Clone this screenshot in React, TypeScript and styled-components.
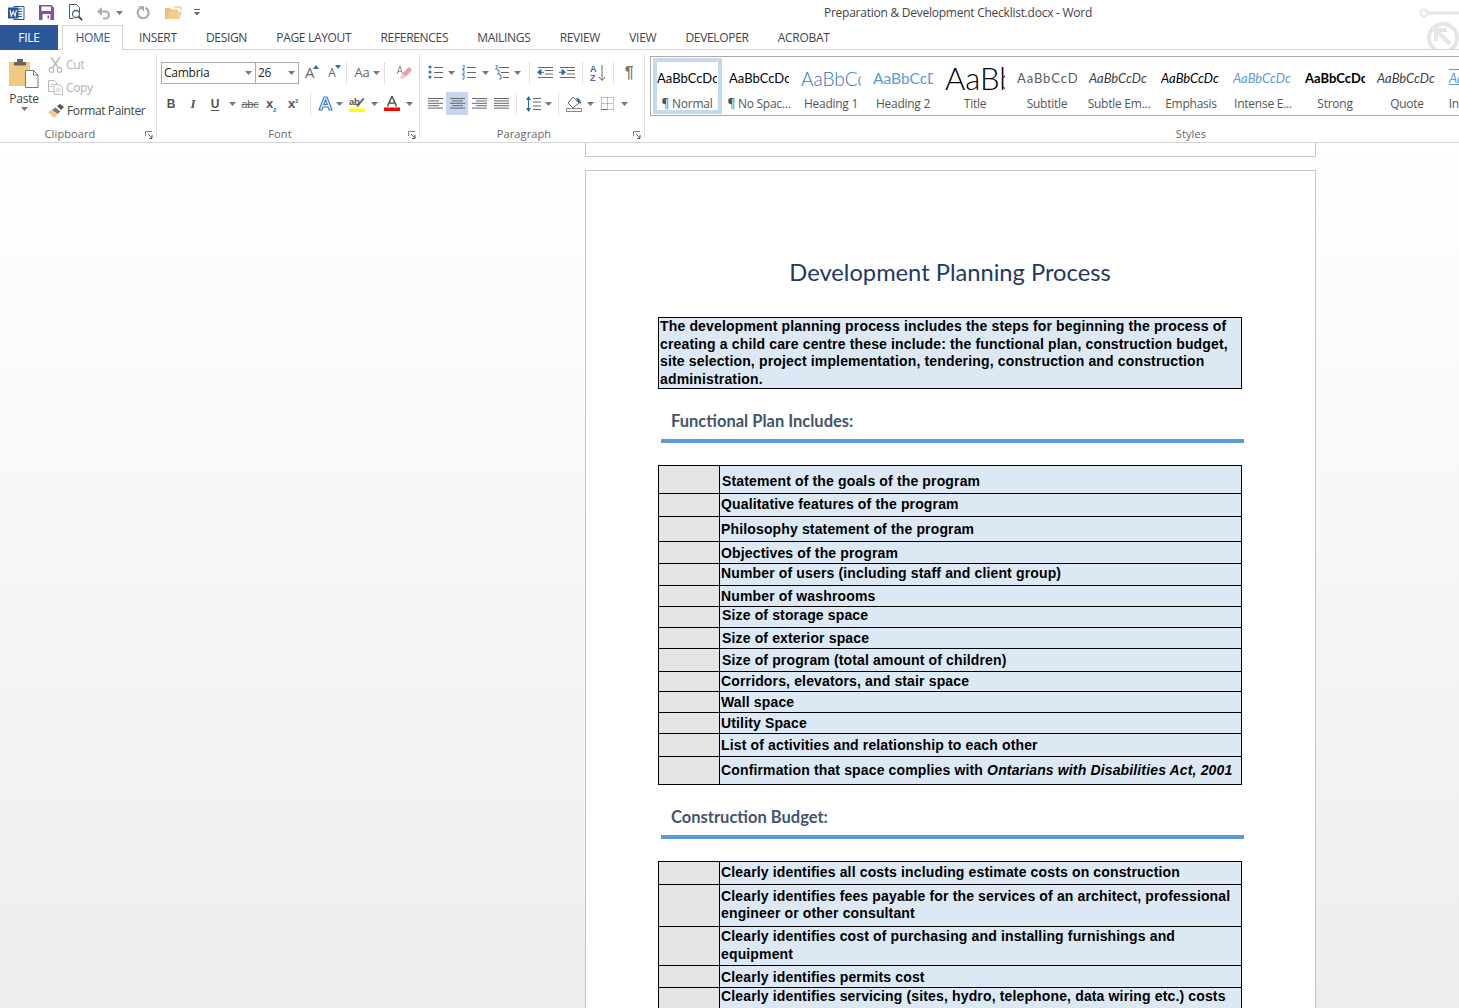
import React from "react";
import styled, { createGlobalStyle } from "styled-components";

const UI_FONT = `"Open Sans", "Noto Sans", sans-serif`;

const Global = createGlobalStyle`
  html, body { margin: 0; padding: 0; height: 100%; overflow: hidden; background: #fff; }
  #root { height: 100%; }
  * { box-sizing: border-box; }
`;

const Shell = styled.div`
  position: relative;
  width: 1459px;
  height: 1008px;
  overflow: hidden;
  display: flex;
  flex-direction: column;
  font-family: ${UI_FONT};
  font-size: 12px;
  letter-spacing: -0.25px;
  color: #444;
`;

/* ---------- title bar ---------- */
const TitleBar = styled.div`
  height: 25px;
  flex: none;
  display: flex;
  align-items: center;
  position: relative;
  padding-left: 5px;
`;
const Qat = styled.span<{ $w: number }>`
  width: ${(p) => p.$w}px;
  height: 22px;
  flex: none;
  display: flex;
  align-items: center;
  justify-content: center;
`;
const DocName = styled.div`
  position: absolute;
  left: 824px;
  top: 4px;
  line-height: 17px;
  white-space: nowrap;
  color: #444;
`;
const Watermark = styled.svg`
  position: absolute;
  right: 0;
  top: 0;
`;

/* ---------- tabs ---------- */
const TabStrip = styled.div`
  height: 25px;
  flex: none;
  display: flex;
  border-bottom: 1px solid #d4d4d4;
  position: relative;
`;
const FileTab = styled.div`
  width: 58px;
  height: 25px;
  margin-right: 4px;
  background: #2b579a;
  color: #fff;
  display: flex;
  align-items: center;
  justify-content: center;
`;
const Tab = styled.div<{ $active?: boolean }>`
  height: 25px;
  padding: 0 14.6px;
  display: flex;
  align-items: center;
  white-space: nowrap;
  letter-spacing: -0.32px;
  color: ${(p) => (p.$active ? "#2b579a" : "#444")};
  background: ${(p) => (p.$active ? "#fff" : "transparent")};
  ${(p) => p.$active && "border: 1px solid #d4d4d4; border-bottom: 0; padding: 0 12.5px 1px; margin-right: 1px;"}
`;

/* ---------- ribbon ---------- */
const Ribbon = styled.div`
  height: 93px;
  flex: none;
  display: flex;
  padding-top: 3px;
  border-bottom: 1px solid #d4d4d4;
  overflow: hidden;
  background: #fff;
  position: relative;
`;
const Group = styled.div<{ $w?: number }>`
  position: relative;
  ${(p) => (p.$w ? `width: ${p.$w}px; flex: none;` : "flex: 1; min-width: 0;")}
  height: 85px;
  padding: 8px 0 0 4px;
  display: flex;
  flex-direction: column;
  border-right: 1px solid ${(p) => (p.$w ? "#e1e1e1" : "transparent")};
`;
const GroupLabel = styled.div<{ $w?: number }>`
  margin-top: auto;
  margin-bottom: -4px;
  margin-right: 20px;
  height: 16px;
  flex: none;
  ${(p) => p.$w && `width: ${p.$w}px;`}
  line-height: 16px;
  font-size: 11px;
  letter-spacing: 0.1px;
  text-align: center;
  color: #666;
`;
const Launcher = styled.svg`
  position: absolute;
  right: 3px;
  bottom: -1px;
`;
const ClipboardBody = styled.div`
  display: flex;
  margin-top: -8px;
`;
const PasteCol = styled.div`
  width: 40px;
  display: flex;
  flex-direction: column;
  align-items: center;
  padding-top: 5px;
`;
const PasteLabel = styled.div`
  margin-top: 3px;
  height: 16px;
  line-height: 16px;
  color: #444;
`;
const SmallCol = styled.div`
  margin-left: 4px;
  display: flex;
  flex-direction: column;
`;
const SmallBtn = styled.div<{ $off?: boolean }>`
  height: 23px;
  display: flex;
  align-items: center;
  gap: 3px;
  white-space: nowrap;
  letter-spacing: -0.38px;
  color: ${(p) => (p.$off ? "#b1b1b1" : "#444")};
`;
const ToolRows = styled.div`
  display: flex;
  flex-direction: column;
  gap: 8px;
`;
const ToolRow = styled.div<{ $ml?: number }>`
  height: 23px;
  margin-left: ${(p) => p.$ml ?? 0}px;
  display: flex;
  align-items: center;
`;
const Tool = styled.span<{ $w?: number; $on?: boolean }>`
  width: ${(p) => p.$w ?? 22}px;
  height: 23px;
  flex: none;
  display: flex;
  align-items: center;
  justify-content: center;
  position: relative;
  background: ${(p) => (p.$on ? "#c5d6f0" : "transparent")};
  & > svg { flex: none; }
`;
const Sep = styled.span<{ $ml?: number; $mr?: number }>`
  width: 1px;
  height: 22px;
  flex: none;
  background: #e1e1e1;
  margin: 0 ${(p) => p.$mr ?? 5}px 0 ${(p) => p.$ml ?? 5}px;
`;
const Combo = styled.div<{ $w: number }>`
  width: ${(p) => p.$w}px;
  height: 22px;
  flex: none;
  margin-right: -1px;
  border: 1px solid #ababab;
  display: flex;
  align-items: center;
  justify-content: space-between;
  padding: 0 3px 0 2px;
  color: #222;
`;
const GlyphB = styled.span`
  font-family: "Liberation Sans", sans-serif;
  font-weight: 700;
  font-size: 12px;
  color: #555;
`;
const GlyphI = styled(GlyphB)`
  font-family: "Liberation Serif", serif;
  font-style: italic;
  font-size: 13px;
`;
const GlyphU = styled(GlyphB)`
  text-decoration: underline;
  text-underline-offset: 2px;
`;
const GlyphAbc = styled.span`
  font-family: "Liberation Sans", sans-serif;
  font-size: 11px;
  color: #666;
  text-decoration: line-through;
`;
const GlyphScript = styled.span`
  font-family: "Liberation Sans", sans-serif;
  font-weight: 700;
  font-size: 13px;
  color: #555;
  & sub, & sup { font-size: 6px; color: #2b6cb0; line-height: 0; }
`;
const GlyphA = styled.span<{ $size: number }>`
  font-size: ${(p) => p.$size}px;
  color: #666;
  line-height: 1;
`;
const Pilcrow = styled.span`
  font-family: "Liberation Sans", sans-serif;
  font-size: 16px;
  font-weight: 700;
  color: #777;
`;

/* ---------- styles gallery ---------- */
const Gallery = styled.div`
  margin: -5px 0 0 1px;
  height: 60px;
  width: 900px;
  flex: none;
  display: flex;
  border: 1px solid #ababab;
  border-right: 0;
`;
const StyleItem = styled.div<{ $active?: boolean }>`
  width: 69px;
  height: 56px;
  margin: 1px 1.5px 0;
  flex: none;
  display: flex;
  flex-direction: column;
  align-items: center;
  box-shadow: ${(p) => (p.$active ? "inset 0 0 0 4px #c5d9f1" : "none")};
`;
const Sample = styled.div<{ $css: string }>`
  width: 60px;
  height: 38px;
  margin-top: 1px;
  overflow: hidden;
  white-space: nowrap;
  display: flex;
  align-items: center;
  font-family: Lato, sans-serif;
  letter-spacing: 0;
  font-size: 13px;
  color: #000;
  ${(p) => p.$css}
`;
const StyleName = styled.div`
  margin-top: -1px;
  line-height: 16px;
  white-space: nowrap;
  color: #555;
`;

/* ---------- document ---------- */
const DocArea = styled.div`
  flex: 1;
  min-height: 0;
  overflow: hidden;
  padding-left: 585px;
  background: linear-gradient(#fff, #ededed);
  font-family: "Liberation Sans", Arial, sans-serif;
  letter-spacing: 0;
`;
const PrevPage = styled.div`
  width: 731px;
  height: 14px;
  background: #fff;
  border: 1px solid #c6c6c6;
  border-top: 0;
`;
const Page = styled.div`
  width: 731px;
  height: 900px;
  margin-top: 13px;
  padding: 86px 73px 0 72px;
  background: #fff;
  border: 1px solid #c6c6c6;
`;
const DocTitle = styled.h1`
  margin: 0;
  height: 30px;
  line-height: 30px;
  text-align: center;
  font-family: Lato, sans-serif;
  font-weight: 400;
  font-size: 23.7px;
  color: #1f3864;
  white-space: nowrap;
`;
const Intro = styled.div`
  margin-top: 30px;
  width: 584px;
  height: 72px;
  padding: 0 0 0 1px;
  border: 1px solid #000;
  background: #dce9f5;
  color: #000;
  font-weight: 700;
  font-size: 14px;
  line-height: 17.7px;
  letter-spacing: 0.155px;
  white-space: nowrap;
`;
const SectionHead = styled.h2<{ $mt: number }>`
  margin: ${(p) => p.$mt}px 0 0;
  padding-left: 13px;
  height: 20px;
  line-height: 20px;
  font-family: Lato, sans-serif;
  font-weight: 700;
  font-size: 16.5px;
  color: #44546a;
`;
const Rule = styled.div`
  margin: 8px 0 0 3px;
  width: 583px;
  height: 4px;
  background: #5b9bd5;
`;
const Checklist = styled.table`
  margin-top: 22px;
  width: 584px;
  border-collapse: collapse;
  table-layout: fixed;
  color: #000;
  font-weight: 700;
  font-size: 14px;
  line-height: 17.5px;
  letter-spacing: 0.145px;
`;
const BoxCell = styled.td`
  width: 61px;
  padding: 0;
  border: 1px solid #000;
  background: #e4e4e4;
`;
const TextCell = styled.td<{ $indent: number; $drop: number; $lift: number }>`
  padding: ${(p) => p.$drop}px 0 ${(p) => p.$lift}px ${(p) => p.$indent}px;
  border: 1px solid #000;
  background: #dce9f5;
  vertical-align: middle;
  white-space: nowrap;
`;
const TightLines = styled.span`
  display: block;
  line-height: 17px;
`;

/* ---------- icons ---------- */
const Caret = () => (
  <svg width="7" height="4" viewBox="0 0 7 4"><path d="M0 0h7L3.5 4z" fill="#777" /></svg>
);
const CaretTool = ({ w = 11 }: { w?: number }) => (
  <Tool $w={w}><Caret /></Tool>
);
const WordLogo = () => (
  <svg width="17" height="16" viewBox="0 0 17 16">
    <path d="M6 1.5h10v13H6z" fill="#fff" stroke="#2b579a" />
    <path d="M10 4h4M10 6.500h4M10 9h4M10 11.500h4" stroke="#2b579a" />
    <path d="M0 2.500h10.500v11H0z" fill="#2b579a" />
    <path d="M2 5l1.300 6 1.900-4.500L7 11l1.400-6" fill="none" stroke="#fff" strokeWidth="1.100" />
  </svg>
);
const SaveIcon = () => (
  <svg width="15" height="15" viewBox="0 0 15 15">
    <path d="M0 0h12.500L15 2.500V15H0z" fill="#80529f" />
    <path d="M2.500 1.500h9.500v4.500H2.500z" fill="#fff" />
    <path d="M3.500 9h8v6h-8z" fill="#fff" />
    <path d="M8.500 10.500h1.500v3H8.500z" fill="#80529f" />
  </svg>
);
const PreviewIcon = () => (
  <svg width="16" height="17" viewBox="0 0 16 17">
    <path d="M1.500.5h7l3 3v5M1.500.5v14h4" fill="none" stroke="#555" />
    <circle cx="8" cy="10" r="3.500" fill="#fff" stroke="#4a6a82" strokeWidth="1.300" />
    <path d="M10.500 12.500l3.500 3.500" stroke="#444" strokeWidth="1.800" />
  </svg>
);
const UndoIcon = () => (
  <svg width="15" height="14" viewBox="0 0 15 14">
    <path d="M2.500 5.500h7a3.500 3.500 0 0 1 0 7H7" fill="none" stroke="#adadad" strokeWidth="2" />
    <path d="M6 1L1 5.500 6 10z" fill="#adadad" />
  </svg>
);
const RedoIcon = () => (
  <svg width="15" height="15" viewBox="0 0 15 15">
    <path d="M9.500 2.800a5.500 5.500 0 1 1-5 .1" fill="none" stroke="#adadad" strokeWidth="2.200" />
    <path d="M2 1h6v5.500z" fill="#adadad" />
  </svg>
);
const FolderIcon = () => (
  <svg width="17" height="14" viewBox="0 0 17 14">
    <path d="M0 2h5l1.500 1.500H13V13H0z" fill="#e8c37e" />
    <path d="M2 13l2-7.500h13L14.500 13z" fill="#f2cf8e" />
    <path d="M9 1h7v3" fill="none" stroke="#e0b870" />
  </svg>
);
const QatMore = () => (
  <svg width="6" height="7" viewBox="0 0 6 7">
    <path d="M0 .5h6" stroke="#666" />
    <path d="M0 3h6L3 6.500z" fill="#666" />
  </svg>
);
const PasteIcon = () => (
  <svg width="30" height="30" viewBox="0 0 30 30">
    <path d="M0 4h21v24H0z" fill="#efc981" />
    <path d="M5 4h12v3.500H5zM8 1h6v3H8z" fill="#666" />
    <path d="M16.500 12.500h8l4.500 4.500v12.500H16.500z" fill="#fff" stroke="#777" />
    <path d="M24.500 12.500V17H29" fill="none" stroke="#777" />
  </svg>
);
const CutIcon = () => (
  <svg width="15" height="16" viewBox="0 0 15 16">
    <path d="M3 0l7.500 11M12 0L4.500 11" stroke="#b8b8b8" strokeWidth="1.400" />
    <circle cx="3.500" cy="13" r="2.300" fill="none" stroke="#b8b8b8" strokeWidth="1.200" />
    <circle cx="11.500" cy="13" r="2.300" fill="none" stroke="#b8b8b8" strokeWidth="1.200" />
  </svg>
);
const CopyIcon = () => (
  <svg width="15" height="15" viewBox="0 0 15 15">
    <path d="M.5.500h6l2 2v9H.5z" fill="#fff" stroke="#bbb" />
    <path d="M6 4.500h5.500l3 3v7H6z" fill="#fff" stroke="#bbb" />
    <path d="M2 4h3M2 6.500h3M8 9h5M8 11h5" stroke="#c8c8c8" />
  </svg>
);
const PainterIcon = () => (
  <svg width="16" height="14" viewBox="0 0 16 14">
    <path d="M9 2l3-2 4 3-3 3z" fill="#555" />
    <path d="M7.500 3.500l5 4L9.500 10 4 6z" fill="#777" />
    <path d="M3.500 5.500l6 4.500-3 4L0 8.500z" fill="#eec98a" />
  </svg>
);
const Launch = () => (
  <Launcher width="8" height="8" viewBox="0 0 8 8">
    <path d="M.5 5V.500H7" fill="none" stroke="#888" />
    <path d="M3 3l4 4M7 4v3.500H4" fill="none" stroke="#555" />
  </Launcher>
);
const GrowMark = ({ down }: { down?: boolean }) => (
  <svg width="6" height="4" viewBox="0 0 6 4">
    <path d={down ? "M0 0h6L3 4z" : "M3 0l3 4H0z"} fill="#2b6cb0" />
  </svg>
);
const SizeTool = styled(Tool)`
  & > svg { position: absolute; right: 2px; top: 4px; }
`;
const EraserIcon = () => (
  <svg width="16" height="15" viewBox="0 0 16 15">
    <path d="M7 8l6-6 3 3-6 6.500H7.500z" fill="#ec9a9f" />
    <path d="M4 12l3-4 3 3.500-2 2H5z" fill="#f6c5c8" />
    <path d="M1 9l3-8 2.500 8M2 6.500h3.500" fill="none" stroke="#8a8a8a" />
  </svg>
);
const TextEffectIcon = () => (
  <svg width="15" height="15" viewBox="0 0 15 15">
    <path d="M1 14L6 1h3l5 13h-3l-1-3H5l-1 3zM5.800 8.500h3.400L7.500 3.800z" fill="#dcebf9" stroke="#3a7fc4" strokeWidth="1.100" />
  </svg>
);
const HighlightIcon = () => (
  <svg width="16" height="16" viewBox="0 0 16 16">
    <path d="M0 12.500h16V16H0z" fill="#ffff00" />
    <path d="M7 10l7-8.500 1.500 1.500L9 11z" fill="#777" />
    <text x="0" y="9" fontFamily="Liberation Sans" fontSize="9.500" fontWeight="700" fill="#555">ab</text>
  </svg>
);
const FontColorIcon = () => (
  <svg width="16" height="15" viewBox="0 0 16 15">
    <path d="M3.500 10.500L8 0l4.500 10.500M5.200 7h5.600" fill="none" stroke="#555" strokeWidth="1.600" />
    <path d="M0 11.500h16V15H0z" fill="#ff0000" />
  </svg>
);
const ListIcon = ({ kind }: { kind: "bullet" | "number" | "multi" }) => {
  const rows = [2, 7, 12];
  return (
    <svg width="15" height="15" viewBox="0 0 15 15">
      {rows.map((y, i) => (
        <g key={y}>
          {kind === "bullet" && <circle cx="2" cy={y} r="1.500" fill="#2b6cb0" />}
          {kind !== "bullet" && <path d={`M${1 + (kind === "multi" ? i * 2 : 0)} ${y - 2}h2v4h-2`} fill="none" stroke="#2b6cb0" strokeWidth=".9" />}
          <path d={`M${kind === "multi" ? 5 + i * 2 : 6} ${y + 0.5}H15`} stroke="#666" />
        </g>
      ))}
    </svg>
  );
};
const IndentIcon = ({ more }: { more?: boolean }) => (
  <svg width="16" height="13" viewBox="0 0 16 13">
    <path d="M1 1.500h15M8 4.500h8M8 8h8M1 11.500h15" stroke="#666" />
    <path d={more ? "M0 6.300h4M3 3.500l3.500 2.800L3 9z" : "M7 6.300H3M4 3.500L.5 6.300 4 9z"} fill="#2b6cb0" stroke="#2b6cb0" />
  </svg>
);
const SortIcon = () => (
  <svg width="16" height="18" viewBox="0 0 16 18">
    <text x="0" y="8" fontFamily="Liberation Sans" fontSize="9" fontWeight="700" fill="#2b6cb0">A</text>
    <text x="0" y="17" fontFamily="Liberation Sans" fontSize="9" fontWeight="700" fill="#80529f">Z</text>
    <path d="M12 1v15M9 13l3 3.500 3-3.500" fill="none" stroke="#666" />
  </svg>
);
const AlignIcon = ({ mode }: { mode: "left" | "center" | "right" | "justify" }) => {
  const long = "0 15";
  const spans: Record<string, string[]> = {
    left: [long, "0 11", long, "0 11", long],
    center: [long, "2 13", long, "2 13", long],
    right: [long, "4 15", long, "4 15", long],
    justify: [long, long, long, long, long],
  };
  return (
    <svg width="15" height="11" viewBox="0 0 15 11">
      {spans[mode].map((s, i) => {
        const [a, b] = s.split(" ");
        return <path key={i} d={`M${a} ${i * 2.4 + 0.5}H${b}`} stroke="#666" />;
      })}
    </svg>
  );
};
const SpacingIcon = () => (
  <svg width="15" height="16" viewBox="0 0 15 16">
    <path d="M7 2.500h8M7 6h8M7 10h8M7 13.500h8" stroke="#666" />
    <path d="M2.500 2v12" stroke="#2b6cb0" />
    <path d="M0 4l2.500-4L5 4zM0 12l2.500 4L5 12z" fill="#2b6cb0" />
  </svg>
);
const ShadingIcon = () => (
  <svg width="17" height="16" viewBox="0 0 17 16">
    <path d="M7 1L2 7l5 5 6-5z" fill="#fff" stroke="#666" />
    <path d="M10 2c3 0 5 2 5 6l-3-2z" fill="#2b6cb0" />
    <path d="M.5 12.500h15v3H.5z" fill="#fff" stroke="#888" />
  </svg>
);
const BordersIcon = () => (
  <svg width="13" height="13" viewBox="0 0 13 13">
    <path d="M.5.500h12v12H.5zM6.500.500v12M.5 6.500h12" fill="none" stroke="#888" strokeDasharray="1 1" />
    <path d="M.5 12.500h6" stroke="#666" />
  </svg>
);

/* ---------- data ---------- */
const gallery = [
  { name: "¶ Normal", text: "AaBbCcDc", css: "", active: true },
  { name: "¶ No Spac...", text: "AaBbCcDc", css: "" },
  { name: "Heading 1", text: "AaBbCc", css: "font-size: 19px; color: #2e74b5; font-weight: 300;" },
  { name: "Heading 2", text: "AaBbCcD", css: "font-size: 15.5px; color: #5b9bd5;" },
  { name: "Title", text: "AaBb", css: "font-size: 31px; font-weight: 300;" },
  { name: "Subtitle", text: "AaBbCcD", css: "color: #5a5a5a; letter-spacing: 0.9px;" },
  { name: "Subtle Em...", text: "AaBbCcDc", css: "font-style: italic; color: #404040;" },
  { name: "Emphasis", text: "AaBbCcDc", css: "font-style: italic;" },
  { name: "Intense E...", text: "AaBbCcDc", css: "font-style: italic; color: #5b9bd5;" },
  { name: "Strong", text: "AaBbCcDc", css: "font-weight: 700;" },
  { name: "Quote", text: "AaBbCcDc", css: "font-style: italic; color: #404040;" },
  { name: "Intense Q...", text: "AaBbCcDc", css: "font-style: italic; color: #5b9bd5; text-decoration: underline overline;" },
];

const tabs = ["INSERT", "DESIGN", "PAGE LAYOUT", "REFERENCES", "MAILINGS", "REVIEW", "VIEW", "DEVELOPER", "ACROBAT"];

type Row = { h: number; text: React.ReactNode; indent?: number; drop?: number; lift?: number };

const planRows: Row[] = [
  { h: 28, text: "Statement of the goals of the program", indent: 2, drop: 4 },
  { h: 23, text: "Qualitative features of the program" },
  { h: 25, text: "Philosophy statement of the program", drop: 1 },
  { h: 22, text: "Objectives of the program", drop: 2 },
  { h: 22, text: "Number of users (including staff and client group)", lift: 2 },
  { h: 21, text: "Number of washrooms", drop: 1 },
  { h: 21, text: "Size of storage space", indent: 2, lift: 2 },
  { h: 21, text: "Size of exterior space", indent: 2, drop: 1 },
  { h: 23, text: "Size of program (total amount of children)", indent: 2, drop: 2 },
  { h: 20, text: "Corridors, elevators, and stair space" },
  { h: 21, text: "Wall space", drop: 1 },
  { h: 21, text: "Utility Space", drop: 1 },
  { h: 23, text: "List of activities and relationship to each other", drop: 2 },
  {
    h: 28,
    text: (
      <>
        Confirmation that space complies with <em>Ontarians with Disabilities Act, 2001</em>
      </>
    ),
  },
];

const budgetRows: Row[] = [
  { h: 23, text: "Clearly identifies all costs including estimate costs on construction" },
  {
    h: 42,
    lift: 2,
    text: (
      <TightLines>
        Clearly identifies fees payable for the services of an architect, professional
        <br />
        engineer or other consultant
      </TightLines>
    ),
  },
  {
    h: 39,
    lift: 1,
    text: (
      <>
        Clearly identifies cost of purchasing and installing furnishings and
        <br />
        equipment
      </>
    ),
  },
  { h: 22, text: "Clearly identifies permits cost", drop: 2 },
  { h: 22, text: "Clearly identifies servicing (sites, hydro, telephone, data wiring etc.) costs", lift: 4 },
];

const Rows = ({ rows }: { rows: Row[] }) => (
  <Checklist>
    <tbody>
      {rows.map((r, i) => (
        <tr key={i} style={{ height: r.h }}>
          <BoxCell />
          <TextCell $indent={r.indent ?? 1} $drop={r.drop ?? 0} $lift={r.lift ?? 0}>{r.text}</TextCell>
        </tr>
      ))}
    </tbody>
  </Checklist>
);

export default function App() {
  return (
    <Shell>
      <Global />
      <TitleBar>
        <Qat $w={22}><WordLogo /></Qat>
        <Qat $w={8} />
        <Qat $w={22}><SaveIcon /></Qat>
        <Qat $w={8} />
        <Qat $w={22}><PreviewIcon /></Qat>
        <Qat $w={8} />
        <Qat $w={16}><UndoIcon /></Qat>
        <Qat $w={16}><Caret /></Qat>
        <Qat $w={7} />
        <Qat $w={18}><RedoIcon /></Qat>
        <Qat $w={12} />
        <Qat $w={18}><FolderIcon /></Qat>
        <Qat $w={9} />
        <Qat $w={12}><QatMore /></Qat>
        <DocName>Preparation &amp; Development Checklist.docx - Word</DocName>
        <Watermark width="40" height="50" viewBox="0 0 40 50">
          <path d="M5 13h35" stroke="#e6e6e6" strokeWidth="3" />
          <circle cx="5" cy="13" r="3.500" fill="#fff" stroke="#e6e6e6" strokeWidth="2" />
          <circle cx="24" cy="38" r="14" fill="none" stroke="#e6e6e6" strokeWidth="4" />
          <path d="M17 41V30h11M18 31l13 13" fill="none" stroke="#e6e6e6" strokeWidth="4" />
        </Watermark>
      </TitleBar>

      <TabStrip>
        <FileTab>FILE</FileTab>
        <Tab $active>HOME</Tab>
        {tabs.map((t) => (
          <Tab key={t}>{t}</Tab>
        ))}
      </TabStrip>

      <Ribbon>
        <Group $w={157}>
          <ClipboardBody>
            <PasteCol>
              <PasteIcon />
              <PasteLabel>Paste</PasteLabel>
              <Caret />
            </PasteCol>
            <SmallCol>
              <SmallBtn $off><CutIcon />Cut</SmallBtn>
              <SmallBtn $off><CopyIcon />Copy</SmallBtn>
              <SmallBtn><PainterIcon />Format Painter</SmallBtn>
            </SmallCol>
          </ClipboardBody>
          <GroupLabel>Clipboard</GroupLabel>
          <Launch />
        </Group>

        <Group $w={263}>
          <ToolRows>
            <ToolRow>
              <Combo $w={95}>Cambria<Caret /></Combo>
              <Combo $w={44}>26<Caret /></Combo>
              <SizeTool $w={23}><GlyphA $size={15}>A</GlyphA><GrowMark /></SizeTool>
              <SizeTool $w={22}><GlyphA $size={12}>A</GlyphA><GrowMark down /></SizeTool>
              <Sep $ml={3} $mr={5} />
              <Tool $w={20}><GlyphA $size={13}>Aa</GlyphA></Tool>
              <CaretTool w={9} />
              <Sep $ml={3} $mr={9} />
              <Tool $w={20}><EraserIcon /></Tool>
            </ToolRow>
            <ToolRow $ml={-1}>
              <Tool><GlyphB>B</GlyphB></Tool>
              <Tool><GlyphI>I</GlyphI></Tool>
              <Tool><GlyphU>U</GlyphU></Tool>
              <CaretTool w={12} />
              <Tool $w={24}><GlyphAbc>abc</GlyphAbc></Tool>
              <Tool $w={18}><GlyphScript>x<sub>2</sub></GlyphScript></Tool>
              <Tool $w={26}><GlyphScript>x<sup>2</sup></GlyphScript></Tool>
              <Sep $ml={4} $mr={5} />
              <Tool $w={18}><TextEffectIcon /></Tool>
              <CaretTool w={10} />
              <Tool $w={26}><HighlightIcon /></Tool>
              <CaretTool w={8} />
              <Tool $w={28}><FontColorIcon /></Tool>
              <CaretTool w={6} />
            </ToolRow>
          </ToolRows>
          <GroupLabel>Font</GroupLabel>
          <Launch />
        </Group>

        <Group $w={225}>
          <ToolRows>
            <ToolRow>
              <Tool><ListIcon kind="bullet" /></Tool>
              <CaretTool />
              <Tool><ListIcon kind="number" /></Tool>
              <CaretTool w={12} />
              <Tool $w={21}><ListIcon kind="multi" /></Tool>
              <CaretTool w={10} />
              <Sep $ml={7} $mr={4} />
              <Tool><IndentIcon /></Tool>
              <Tool><IndentIcon more /></Tool>
              <Sep $ml={4} $mr={4} />
              <Tool><SortIcon /></Tool>
              <Sep $ml={4} $mr={4} />
              <Tool><Pilcrow>¶</Pilcrow></Tool>
            </ToolRow>
            <ToolRow>
              <Tool><AlignIcon mode="left" /></Tool>
              <Tool $on><AlignIcon mode="center" /></Tool>
              <Tool><AlignIcon mode="right" /></Tool>
              <Tool><AlignIcon mode="justify" /></Tool>
              <Sep $ml={4} $mr={5} />
              <Tool><SpacingIcon /></Tool>
              <CaretTool w={8} />
              <Sep $ml={6} $mr={5} />
              <Tool $w={20}><ShadingIcon /></Tool>
              <CaretTool w={12} />
              <Tool><BordersIcon /></Tool>
              <CaretTool w={12} />
            </ToolRow>
          </ToolRows>
          <GroupLabel>Paragraph</GroupLabel>
          <Launch />
        </Group>

        <Group>
          <Gallery>
            {gallery.map((g) => (
              <StyleItem key={g.name} $active={g.active}>
                <Sample $css={g.css}>{g.text}</Sample>
                <StyleName>{g.name}</StyleName>
              </StyleItem>
            ))}
          </Gallery>
          <GroupLabel $w={1084}>Styles</GroupLabel>
        </Group>
      </Ribbon>

      <DocArea>
        <PrevPage />
        <Page>
          <DocTitle>Development Planning Process</DocTitle>
          <Intro>
            The development planning process includes the steps for beginning the process of
            <br />
            creating a child care centre these include: the functional plan, construction budget,
            <br />
            site selection, project implementation, tendering, construction and construction
            <br />
            administration.
          </Intro>
          <SectionHead $mt={22}>Functional Plan Includes:</SectionHead>
          <Rule />
          <Rows rows={planRows} />
          <SectionHead $mt={22}>Construction Budget:</SectionHead>
          <Rule />
          <Rows rows={budgetRows} />
        </Page>
      </DocArea>
    </Shell>
  );
}
